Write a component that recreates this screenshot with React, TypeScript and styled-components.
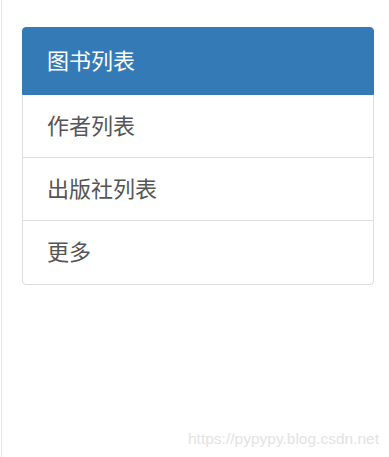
import React from 'react'
import styled, { createGlobalStyle } from 'styled-components'

const GlobalStyle = createGlobalStyle`
  html, body {
    margin: 0;
    padding: 0;
    background: #fff;
  }
  * {
    box-sizing: border-box;
  }
`

const Page = styled.div`
  position: relative;
  height: 457px;
  margin-left: 1px;
  border-left: 1px solid #e6e6e6;
  padding: 27px 15px 0 20px;
  font-family: 'Liberation Sans', 'Noto Sans CJK SC', sans-serif;
`

const ListGroup = styled.div`
  display: flex;
  flex-direction: column;
`

const ListItem = styled.a<{ $active?: boolean }>`
  display: flex;
  align-items: center;
  height: ${(p) => (p.$active ? '68px' : '64px')};
  margin-top: -1px;
  padding: 0 24px 5px;
  border: 1px solid ${(p) => (p.$active ? '#337ab7' : '#ddd')};
  background: ${(p) => (p.$active ? '#337ab7' : '#fff')};
  color: ${(p) => (p.$active ? '#fff' : '#555')};
  font-size: 22px;
  text-decoration: none;
  position: relative;
  z-index: ${(p) => (p.$active ? 2 : 1)};

  &:first-child {
    margin-top: 0;
    border-top-left-radius: 4px;
    border-top-right-radius: 4px;
  }
  &:last-child {
    height: 65px;
    border-bottom-left-radius: 4px;
    border-bottom-right-radius: 4px;
  }
`

const Watermark = styled.div`
  position: absolute;
  right: 10px;
  bottom: 9px;
  font-family: 'Liberation Sans', Arial, sans-serif;
  font-size: 15.5px;
  color: #e3e3e3;
`

const items = ['图书列表', '作者列表', '出版社列表', '更多']

export default function App() {
  return (
    <>
      <GlobalStyle />
      <Page>
        <ListGroup>
          {items.map((label, i) => (
            <ListItem key={label} href="#" $active={i === 0}>
              {label}
            </ListItem>
          ))}
        </ListGroup>
        <Watermark>https://pypypy.blog.csdn.net</Watermark>
      </Page>
    </>
  )
}
